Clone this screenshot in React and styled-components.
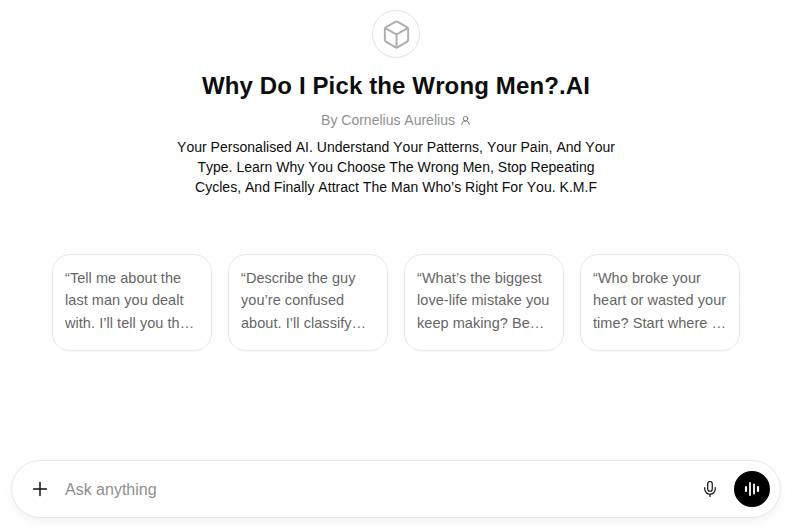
import React from "react";
import styled, { createGlobalStyle } from "styled-components";
import { Plus, Mic, Box, UserRound } from "lucide-react";

const GlobalStyle = createGlobalStyle`
  html, body {
    margin: 0;
    padding: 0;
    background: #fff;
    font-family: "Liberation Sans", Arial, sans-serif;
    font-kerning: none;
    overflow: hidden;
  }
`;

const Page = styled.div`
  width: 785px;
  height: 526px;
  box-sizing: border-box;
  padding: 10px 4px 8px 11px;
  display: flex;
  flex-direction: column;
`;

const Hero = styled.section`
  display: flex;
  flex-direction: column;
  align-items: center;
`;

const LogoCircle = styled.div`
  width: 48px;
  height: 48px;
  box-sizing: border-box;
  border: 1px solid #e3e3e3;
  border-radius: 50%;
  display: flex;
  align-items: center;
  justify-content: center;
  color: #adadad;
`;

const Title = styled.h1`
  margin: 12px 0 0;
  font-size: 24px;
  line-height: 32px;
  font-weight: 700;
  letter-spacing: 0.13px;
  color: #0d0d0d;
`;

const Author = styled.div`
  margin-top: 8px;
  display: flex;
  align-items: center;
  gap: 5px;
  font-size: 14px;
  line-height: 20px;
  color: #8f8f8f;
`;

const Description = styled.p`
  margin: 7px 0 0;
  width: 445px;
  font-size: 14px;
  line-height: 20px;
  letter-spacing: 0.02px;
  text-align: center;
  color: #0d0d0d;
`;

const Cards = styled.div`
  margin-top: 57px;
  padding: 0 41px;
  display: grid;
  grid-template-columns: repeat(4, 160px);
  gap: 16px;
`;

const Card = styled.div`
  box-sizing: border-box;
  height: 97px;
  padding: 12px;
  border: 1px solid #e6e6e6;
  border-radius: 18px;
  box-shadow: 0 1px 2px rgba(0, 0, 0, 0.03);
  font-size: 14.5px;
  font-kerning: normal;
  letter-spacing: 0.05px;
  line-height: 22.4px;
  color: #666;
`;

const CardText = styled.div`
  display: -webkit-box;
  -webkit-box-orient: vertical;
  -webkit-line-clamp: 3;
  overflow: hidden;
`;

const Composer = styled.div`
  margin-top: auto;
  height: 58px;
  box-sizing: border-box;
  padding: 0 10px 0 17px;
  border: 1px solid #e5e5e5;
  border-radius: 29px;
  box-shadow: 0 4px 8px rgba(0, 0, 0, 0.05);
  display: flex;
  align-items: center;
  color: #0d0d0d;
`;

const Placeholder = styled.span`
  margin-left: 14px;
  padding-top: 2px;
  flex: 1;
  font-size: 16px;
  color: #8f8f8f;
`;

const VoiceButton = styled.div`
  margin-left: 15px;
  width: 36px;
  height: 36px;
  border-radius: 50%;
  background: #000;
  color: #fff;
  display: flex;
  align-items: center;
  justify-content: center;
`;

const prompts = [
  "“Tell me about the last man you dealt with. I’ll tell you the pattern you keep repeating.”",
  "“Describe the guy you’re confused about. I’ll classify him and tell you what to do.”",
  "“What’s the biggest love-life mistake you keep making? Be honest and we’ll fix it.”",
  "“Who broke your heart or wasted your time? Start where it still hurts the most.”",
];

export default function App() {
  return (
    <Page>
      <GlobalStyle />
      <Hero>
        <LogoCircle>
          <Box size={31} strokeWidth={1.5} />
        </LogoCircle>
        <Title>Why Do I Pick the Wrong Men?.AI</Title>
        <Author>
          By Cornelius Aurelius
          <UserRound size={11} strokeWidth={1.6} color="#555" />
        </Author>
        <Description>
          Your Personalised AI. Understand Your Patterns, Your Pain, And Your
          Type. Learn Why You Choose The Wrong Men, Stop Repeating Cycles, And
          Finally Attract The Man Who’s Right For You. K.M.F
        </Description>
      </Hero>
      <Cards>
        {prompts.map((text) => (
          <Card key={text}>
            <CardText>{text}</CardText>
          </Card>
        ))}
      </Cards>
      <Composer>
        <Plus size={22} strokeWidth={1.6} />
        <Placeholder>Ask anything</Placeholder>
        <Mic size={18} strokeWidth={1.6} />
        <VoiceButton>
          <svg width="20" height="20" viewBox="0 0 20 20" fill="none" stroke="currentColor" strokeLinecap="round">
            <path d="M4 8v4" strokeWidth="2.2" />
            <path d="M8 4v12" strokeWidth="1.8" />
            <path d="M12 5.5v9" strokeWidth="1.8" />
            <path d="M16 8v4" strokeWidth="2.2" />
          </svg>
        </VoiceButton>
      </Composer>
    </Page>
  );
}
